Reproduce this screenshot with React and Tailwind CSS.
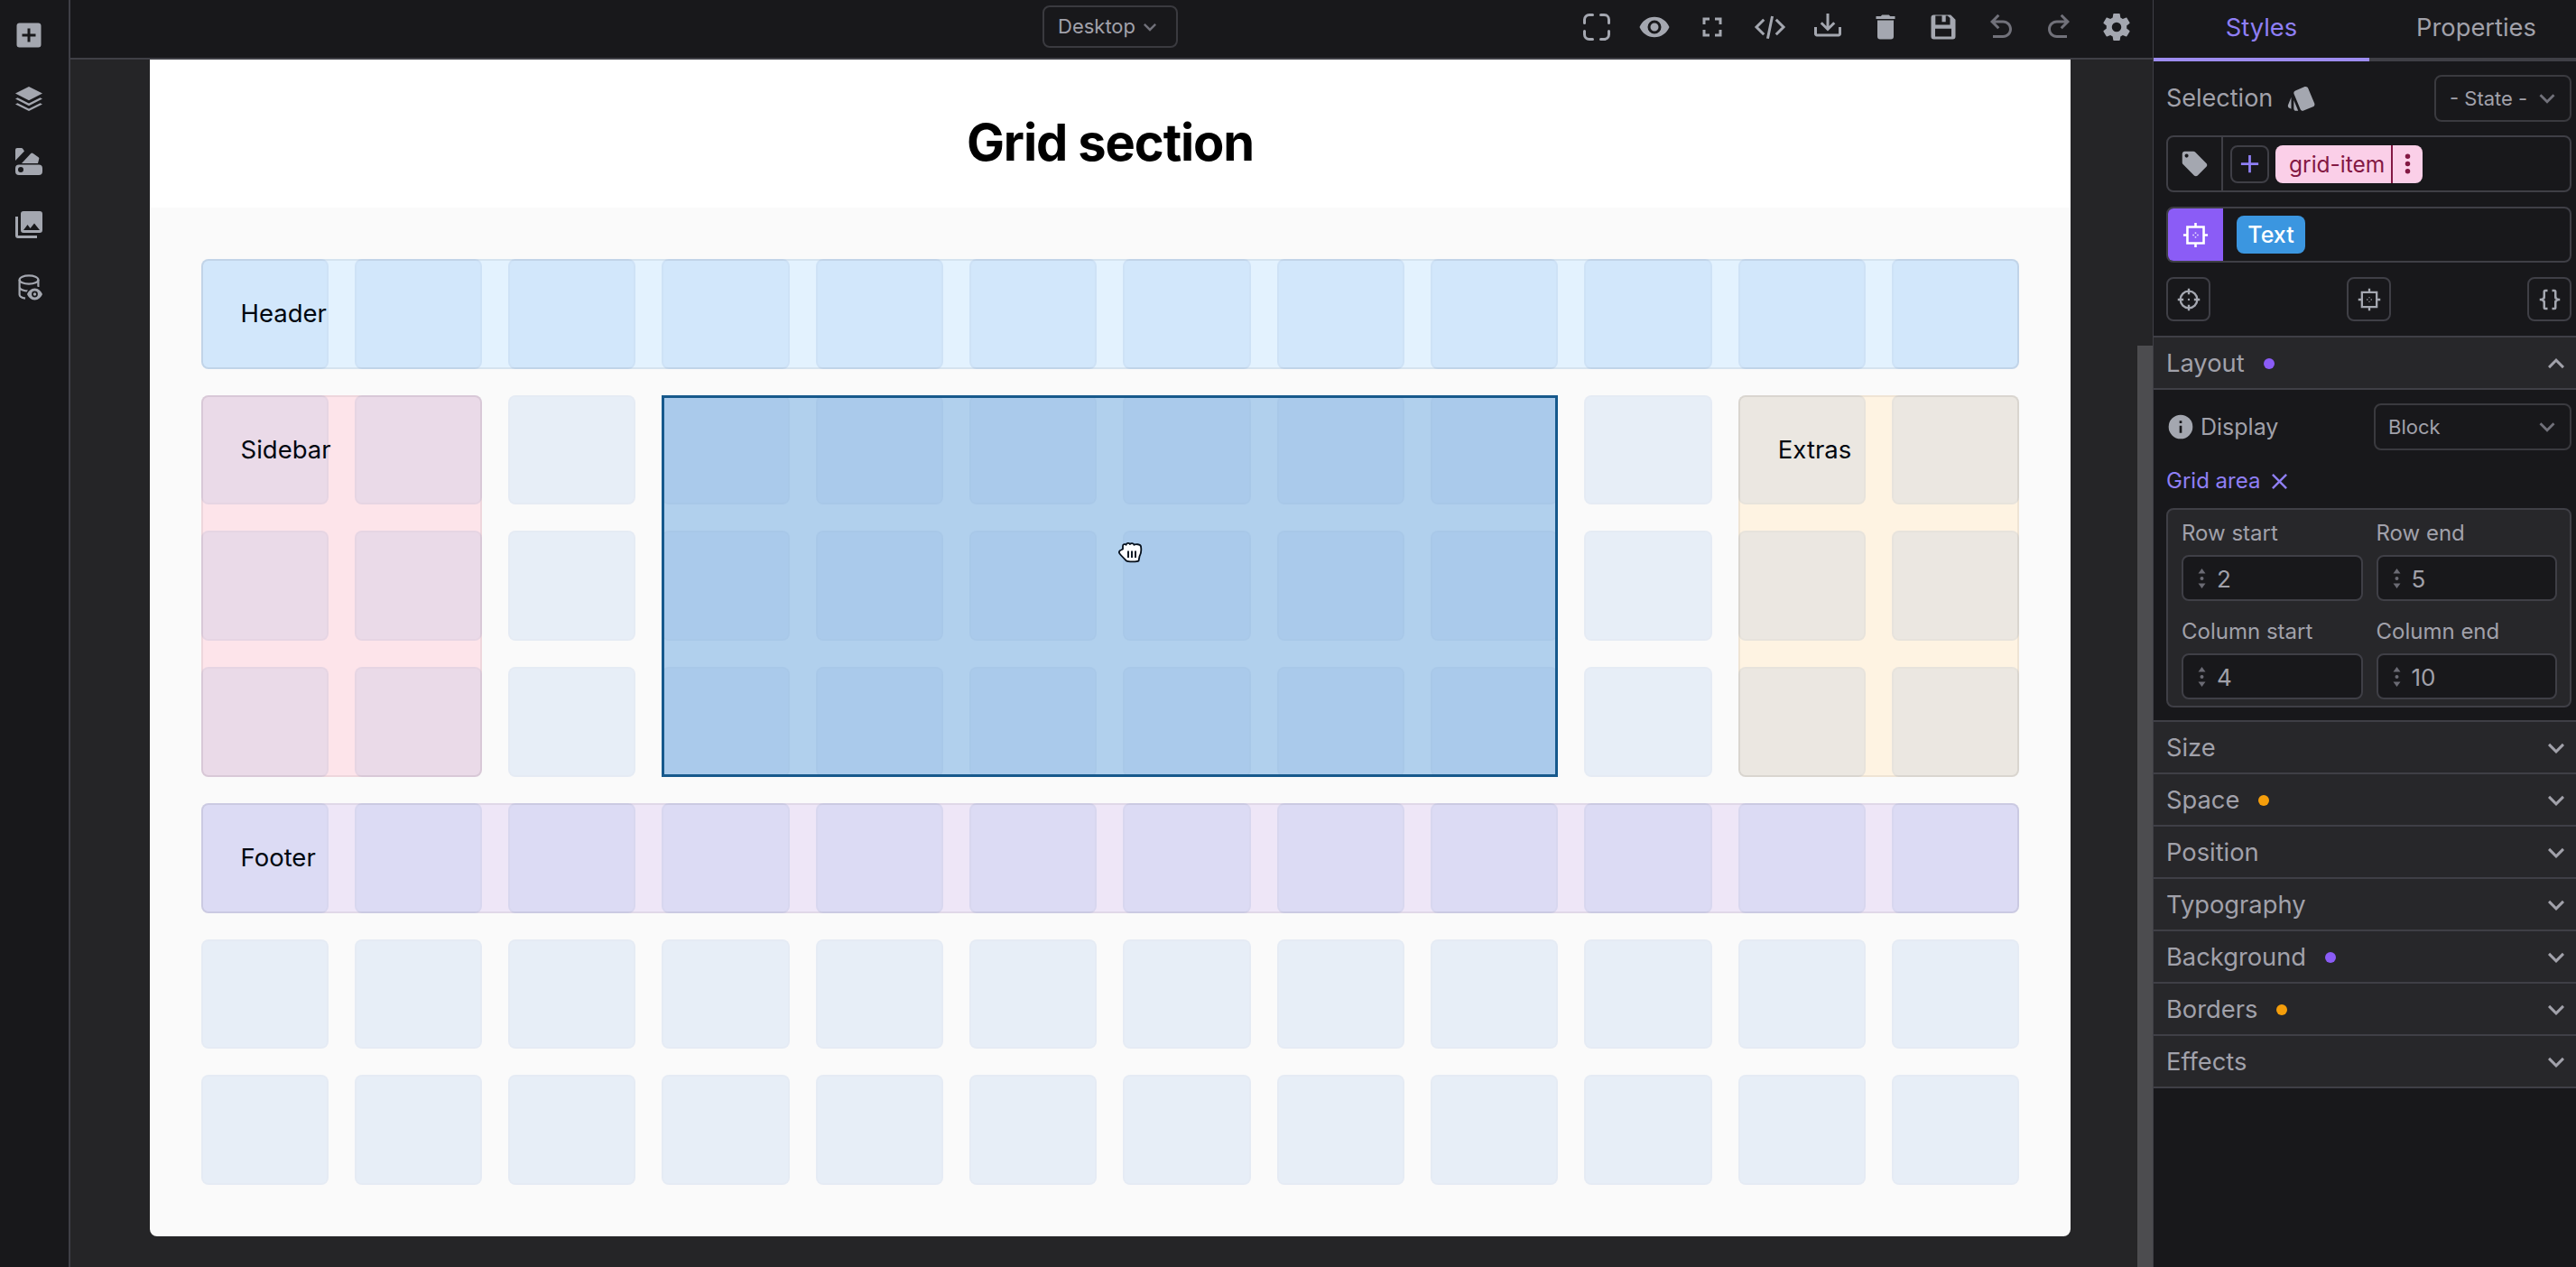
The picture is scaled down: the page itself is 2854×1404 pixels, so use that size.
import React from "react";

const P = {
  plusBox: "M17,13H13V17H11V13H7V11H11V7H13V11H17M19,3H5C3.89,3 3,3.89 3,5V19A2,2 0 0,0 5,21H19A2,2 0 0,0 21,19V5C21,3.89 20.1,3 19,3Z",
  imgs: "M22,16V4A2,2 0 0,0 20,2H8A2,2 0 0,0 6,4V16A2,2 0 0,0 8,18H20A2,2 0 0,0 22,16M11,12L13.03,14.71L16,11L20,16H8M2,6V20A2,2 0 0,0 4,22H18V20H4V6",
  eye: "M12,9A3,3 0 0,0 9,12A3,3 0 0,0 12,15A3,3 0 0,0 15,12A3,3 0 0,0 12,9M12,17A5,5 0 0,1 7,12A5,5 0 0,1 12,7A5,5 0 0,1 17,12A5,5 0 0,1 12,17M12,4.5C7,4.5 2.73,7.61 1,12C2.73,16.39 7,19.5 12,19.5C17,19.5 21.27,16.39 23,12C21.27,7.61 17,4.5 12,4.5Z",
  full: "M5,5H10V7H7V10H5V5M14,5H19V10H17V7H14V5M17,14H19V19H14V17H17V14M10,17V19H5V14H7V17H10Z",
  tray: "M2 12H4V17H20V12H22V17C22 18.11 21.11 19 20 19H4C2.9 19 2 18.11 2 17V12M12 15L17.55 9.54L16.13 8.13L13 11.25V2H11V11.25L7.88 8.13L6.46 9.55L12 15Z",
  del: "M19,4H15.5L14.5,3H9.5L8.5,4H5V6H19M6,19A2,2 0 0,0 8,21H16A2,2 0 0,0 18,19V7H6V19Z",
  undo: "M20 13.5C20 17.09 17.09 20 13.5 20H6V18H13.5C16 18 18 16 18 13.5S16 9 13.5 9H7.83L10.91 12.09L9.5 13.5L4 8L9.5 2.5L10.92 3.91L7.83 7H13.5C17.09 7 20 9.91 20 13.5Z",
  cog: "M12,15.5A3.5,3.5 0 0,1 8.5,12A3.5,3.5 0 0,1 12,8.5A3.5,3.5 0 0,1 15.5,12A3.5,3.5 0 0,1 12,15.5M19.43,12.97C19.47,12.65 19.5,12.33 19.5,12C19.5,11.67 19.47,11.34 19.43,11L21.54,9.37C21.73,9.22 21.78,8.95 21.66,8.73L19.66,5.27C19.54,5.05 19.27,4.96 19.05,5.05L16.56,6.05C16.04,5.66 15.5,5.32 14.87,5.07L14.5,2.42C14.46,2.18 14.25,2 14,2H10C9.75,2 9.54,2.18 9.5,2.42L9.13,5.07C8.5,5.32 7.96,5.66 7.44,6.05L4.95,5.05C4.73,4.96 4.46,5.05 4.34,5.27L2.34,8.73C2.21,8.95 2.27,9.22 2.46,9.37L4.57,11C4.53,11.34 4.5,11.67 4.5,12C4.5,12.33 4.53,12.65 4.57,12.97L2.46,14.63C2.27,14.78 2.21,15.05 2.34,15.27L4.34,18.73C4.46,18.95 4.73,19.03 4.95,18.95L7.44,17.94C7.96,18.34 8.5,18.68 9.13,18.93L9.5,21.58C9.54,21.82 9.75,22 10,22H14C14.25,22 14.46,21.82 14.5,21.58L14.87,18.93C15.5,18.67 16.04,18.34 16.56,17.94L19.05,18.95C19.27,19.03 19.54,18.95 19.66,18.73L21.66,15.27C21.78,15.05 21.73,14.78 21.54,14.63L19.43,12.97Z",
  swatch: "M2.53,19.65L3.87,20.21V11.18L1.44,17.04C1.03,18.06 1.5,19.23 2.53,19.65M22.03,15.95L17.07,4C16.76,3.23 16.03,2.77 15.26,2.75C15,2.75 14.73,2.79 14.47,2.9L7.1,5.95C6.35,6.26 5.89,7 5.87,7.75C5.86,8 5.91,8.29 6,8.55L11,20.5C11.29,21.28 12.03,21.74 12.81,21.75C13.07,21.75 13.33,21.7 13.58,21.6L20.94,18.55C21.96,18.13 22.45,16.96 22.03,15.95M5.88,19.75A2,2 0 0,0 7.88,21.75H9.33L5.88,13.41V19.75Z",
  tag: "M5.5,7A1.5,1.5 0 0,1 4,5.5A1.5,1.5 0 0,1 5.5,4A1.5,1.5 0 0,1 7,5.5A1.5,1.5 0 0,1 5.5,7M21.41,11.58L12.41,2.58C12.05,2.22 11.55,2 11,2H4C2.89,2 2,2.89 2,4V11C2,11.55 2.22,12.05 2.59,12.41L11.58,21.41C11.95,21.77 12.45,22 13,22C13.55,22 14.05,21.77 14.41,21.41L21.41,14.41C21.78,14.05 22,13.55 22,13C22,12.44 21.77,11.94 21.41,11.58Z",
  info: "M13,9H11V7H13M13,17H11V11H13M12,2A10,10 0 0,0 2,12A10,10 0 0,0 12,22A10,10 0 0,0 22,12A10,10 0 0,0 12,2Z",
  chev: "M7.41,8.58L12,13.17L16.59,8.58L18,10L12,16L6,10L7.41,8.58Z",
  plus: "M19,13H13V19H11V13H5V11H11V5H13V11H19V13Z",
  dots: "M12,16A2,2 0 0,1 14,18A2,2 0 0,1 12,20A2,2 0 0,1 10,18A2,2 0 0,1 12,16M12,10A2,2 0 0,1 14,12A2,2 0 0,1 12,14A2,2 0 0,1 10,12A2,2 0 0,1 12,10M12,4A2,2 0 0,1 14,6A2,2 0 0,1 12,8A2,2 0 0,1 10,6A2,2 0 0,1 12,4Z",
  close: "M19,6.41L17.59,5L12,10.59L6.41,5L5,6.41L10.59,12L5,17.59L6.41,19L12,13.41L17.59,19L19,17.59L13.41,12L19,6.41Z",
  braces: "M8,3A2,2 0 0,0 6,5V9A2,2 0 0,1 4,11H3V13H4A2,2 0 0,1 6,15V19A2,2 0 0,0 8,21H10V19H8V14A2,2 0 0,0 6,12A2,2 0 0,0 8,10V5H10V3M16,3A2,2 0 0,1 18,5V9A2,2 0 0,0 20,11H21V13H20A2,2 0 0,0 18,15V19A2,2 0 0,1 16,21H14V19H16V14A2,2 0 0,1 18,12A2,2 0 0,1 16,10V5H14V3H16Z",
};

const I = ({ d, className = "w-[36px] h-[36px]" }) => (
  <svg viewBox="0 0 24 24" fill="currentColor" className={className}><path d={d} /></svg>
);

const Corners = () => (
  <svg viewBox="0 0 24 24" fill="none" stroke="currentColor" strokeWidth="2" strokeLinecap="round" className="w-[36px] h-[36px]">
    <path d="M3 9V6.5A3.5 3.5 0 0 1 6.5 3H9M15 3H17.5A3.5 3.5 0 0 1 21 6.5V9M21 15V17.5A3.5 3.5 0 0 1 17.5 21H15M9 21H6.5A3.5 3.5 0 0 1 3 17.5V15" />
  </svg>
);
const Code = () => (
  <svg viewBox="0 0 24 24" fill="none" stroke="currentColor" strokeWidth="2" className="w-[36px] h-[36px]">
    <path d="M7.5 6.5L2 12L7.5 17.5M16.5 6.5L22 12L16.5 17.5M13.7 4L10.3 20.5" />
  </svg>
);
const Save = () => (
  <svg viewBox="0 0 24 24" fill="currentColor" fillRule="evenodd" className="w-[36px] h-[36px]">
    <path d="M5 3H17.5L21 6.5V19A2 2 0 0 1 19 21H5A2 2 0 0 1 3 19V5A2 2 0 0 1 5 3ZM6.2 3.6V10.3H17V5.4L15.2 3.6H13.8V8.2H11V3.6ZM6 13.2V19H18V13.2Z" />
  </svg>
);
const Frame = ({ className }) => (
  <svg viewBox="0 0 24 24" fill="none" stroke="currentColor" strokeWidth="2" className={className}>
    <path d="M5 5H19V19H5ZM12 1.5V5M12 19V22.5M1.5 12H5M19 12H22.5" />
    <path d="M12 9.6V10.6M12 13.4V14.4M9.6 12H10.6M13.4 12H14.4" strokeWidth="1.2" />
  </svg>
);
const Cross = ({ className }) => (
  <svg viewBox="0 0 24 24" fill="none" stroke="currentColor" strokeWidth="2" className={className}>
    <circle cx="12" cy="12" r="8" />
    <path d="M12 1.5V7M12 17V22.5M1.5 12H7M17 12H22.5" />
    <circle cx="12" cy="12" r="1" fill="currentColor" stroke="none" />
  </svg>
);
const Layers = () => (
  <svg viewBox="0 0 30 27" fill="currentColor" className="w-[30px] h-[27px]">
    <path d="M15 0L30 7.6L15 15.2L0 7.6Z" />
    <path d="M2.5 12.3L15 18.6L27.5 12.3L30 13.6L15 21.2L0 13.6Z" />
    <path d="M2.5 18.2L15 24.5L27.5 18.2L30 19.5L15 27L0 19.5Z" />
  </svg>
);
const SwatchRail = () => (
  <svg viewBox="0 0 30 30" fill="currentColor" fillRule="evenodd" className="w-[30px] h-[30px]">
    <path d="M2 0H6.5A2 2 0 0 1 8.2 .8L10 3.6L0 14V2A2 2 0 0 1 2 0Z" />
    <path d="M7 17L17 6.2A2 2 0 0 1 19.6 6L25.6 10.2A2 2 0 0 1 26 13L25 17Z" />
    <path d="M4 18.5H26A4 4 0 0 1 30 22.5V26A4 4 0 0 1 26 30H4A4 4 0 0 1 0 26V22.5A4 4 0 0 1 4 18.5ZM6 21A3 3 0 1 0 6 27A3 3 0 1 0 6 21Z" />
  </svg>
);
const DbEye = () => (
  <svg viewBox="0 0 28 31" className="w-[28px] h-[31px]">
    <g fill="none" stroke="currentColor" strokeWidth="2.2">
      <ellipse cx="12" cy="6" rx="10.4" ry="4.6" />
      <path d="M1.6 6V22.5C1.6 24.5 4.5 26 8 26.6M22.4 6V14M1.6 14C1.6 16.5 6 18.6 12 18.6C13 18.6 14 18.5 15 18.4" />
    </g>
    <path d="M18.5 13.5C13.5 13.5 10 18 9 22C10 26 13.5 30.5 18.5 30.5C23.5 30.5 27 26 28 22C27 18 23.5 13.5 18.5 13.5Z" fill="#18181b" transform="translate(0 -.5)" />
    <path d="M18.5 15.5C14.5 15.5 11.5 18.6 10 22C11.5 25.4 14.5 28.5 18.5 28.5C22.5 28.5 25.5 25.4 27 22C25.5 18.6 22.5 15.5 18.5 15.5ZM18.5 18.6A3.4 3.4 0 1 1 18.5 25.4A3.4 3.4 0 1 1 18.5 18.6ZM18.5 20.3A1.7 1.7 0 1 0 18.5 23.7A1.7 1.7 0 1 0 18.5 20.3Z" fill="currentColor" fillRule="evenodd" />
  </svg>
);
const Stepper = () => (
  <svg viewBox="0 0 8 22" fill="#6b6b74" className="w-[9px] h-[22px] shrink-0">
    <path d="M4 0L8 5.5H0ZM4 22L8 16.5H0Z" />
    <circle cx="4" cy="11" r="2" />
  </svg>
);
const Hand = () => (
  <svg viewBox="0 0 28 24" className="w-[28px] h-[24px]">
    <path d="M2.5 13.5C1.2 12 2.2 10 4 9.5L6 8.5V5C6 3.2 8.6 2.4 9.6 3.8C10 1.6 13.2 1.4 14 3C15 1.6 18 1.8 18.4 3.8C20 2.6 25.6 3 26 5.5C26.6 9 26 14 24.5 16.5L23.5 21.5C22 22.6 12 22.8 10 21.5C8 19.5 4.5 16 2.5 13.5Z" fill="#fff" stroke="#06101c" strokeWidth="1.8" strokeLinejoin="round" />
    <path d="M12 10.5V18M16 10.5V18M20 10.5V18" stroke="#06101c" strokeWidth="1.9" />
  </svg>
);

const Select = ({ label, className }) => (
  <div className={"h-[52px] border-2 border-[#3a3a3f] rounded-lg flex items-center text-[22px] text-[#a1a1aa] " + className}>
    <span>{label}</span>
    <span className="ml-auto mr-[8px] text-[#71717a]"><I d={P.chev} className="w-[34px] h-[34px]" /></span>
  </div>
);

const Num = ({ label, value, top }) => (
  <div className={top}>
    <div className="h-[30px] leading-[30px] text-[24px] text-[#a1a1aa]">{label}</div>
    <div className="mt-[9px] h-[51px] rounded-lg border-2 border-[#3f3f46] bg-[#18181b] flex items-center pl-[16px] gap-[12px] text-[26px] text-[#a1a1aa]">
      <Stepper />
      <span className="pt-[1px]">{value}</span>
    </div>
  </div>
);

const Section = ({ name, dot, open }) => (
  <div className="h-[58px] border-b-2 border-[#3f3f46] bg-[#27272a] flex items-center pl-[14px] pr-[4px] pt-[2px] text-[27.3px] text-[#a1a1aa]">
    <span>{name}</span>
    {dot && <span className={"ml-[21px] w-[12px] h-[12px] rounded-full " + dot} />}
    <span className={"ml-auto text-[#a1a1aa] " + (open ? "rotate-180" : "")}><I d={P.chev} className="w-[36px] h-[36px]" /></span>
  </div>
);

const inMain = (r, c) => r >= 2 && r <= 4 && c >= 4 && c <= 9;
const inRegion = (r, c) =>
  r === 1 || r === 5 || (r >= 2 && r <= 4 && (c <= 2 || c >= 11));

const cellClass = (r, c) => {
  if (inMain(r, c)) return "rounded-lg bg-[#0057d4]/[0.04] border-2 border-black/[0.01]";
  if (inRegion(r, c)) return "rounded-lg bg-[#0057d4]/[0.075] border-2 border-black/[0.02]";
  return "rounded-lg bg-[#0057d4]/[0.075] border-2 border-black/[0.012]";
};

const cells = [];
for (let r = 1; r <= 7; r++) for (let c = 1; c <= 12; c++) cells.push([r, c]);

export default function App() {
  return (
    <div className="w-[2854px] h-[1404px] flex overflow-hidden bg-[#18181b] [font-family:Inter,sans-serif]">
      {/* Left rail */}
      <div className="w-[78px] shrink-0 border-r-2 border-[#3f3f46] flex flex-col pl-[14px] pt-[21px] gap-[34px] text-[#a4a7b0]">
        <div className="h-[36px] flex items-center"><I d={P.plusBox} /></div>
        <div className="h-[36px] flex items-center pl-[3px]"><Layers /></div>
        <div className="h-[36px] flex items-center pl-[3px]"><SwatchRail /></div>
        <div className="h-[36px] flex items-center"><I d={P.imgs} /></div>
        <div className="h-[36px] flex items-center pl-[6px]"><DbEye /></div>
      </div>

      {/* Center */}
      <div className="w-[2308px] shrink-0 flex flex-col border-r border-[#3f3f46]">
        <div className="h-[66px] shrink-0 border-b-2 border-[#3f3f46] flex items-center pb-[5px] pr-[22px]">
          <div className="ml-[1077px] w-[150px] h-[47px] border-2 border-[#3a3a3f] rounded-lg flex items-center pl-[15px] text-[22px] text-[#a1a1aa]">
            Desktop
            <span className="ml-[2px] text-[#71717a]"><I d={P.chev} className="w-[28px] h-[28px]" /></span>
          </div>
          <div className="ml-auto flex items-center gap-[28px] text-[#a4a7b0]">
            <Corners />
            <I d={P.eye} />
            <I d={P.full} />
            <Code />
            <I d={P.tray} />
            <I d={P.del} />
            <Save />
            <span className="text-[#71717a]"><I d={P.undo} /></span>
            <span className="text-[#71717a] -scale-x-100"><I d={P.undo} /></span>
            <I d={P.cog} />
          </div>
        </div>

        <div className="flex-1 flex bg-[#252527] min-h-0">
          <div className="ml-[88px] w-[2128px] h-[1304px] shrink-0 flex flex-col bg-[#fafafa] rounded-b-lg">
            <div className="h-[164px] shrink-0 bg-white flex items-center justify-center pt-[20px]">
              <h1 className="text-[56px] font-bold text-black tracking-[-0.02em]">Grid section</h1>
            </div>
            <div className="flex-1 px-[56.5px] py-[57px] min-h-0">
              <div className="h-full grid grid-cols-12 grid-rows-7 gap-[29px] text-[27.5px] text-black">
                <div className="col-start-1 col-end-13 row-start-1 row-end-2 bg-[#e3f2fe] rounded-lg border-2 border-black/[0.06] flex items-center pl-[42px]">Header</div>
                <div className="col-start-1 col-end-3 row-start-2 row-end-5 bg-[#fde4ea] rounded-lg border-2 border-black/[0.06] pl-[42px]">
                  <div className="h-[118px] flex items-center">Sidebar</div>
                </div>
                <div className="col-start-11 col-end-13 row-start-2 row-end-5 bg-[#fef3e2] rounded-lg border-2 border-black/[0.06] pl-[42px]">
                  <div className="h-[118px] flex items-center">Extras</div>
                </div>
                <div className="col-start-1 col-end-13 row-start-5 row-end-6 bg-[#eee6f7] rounded-lg border-2 border-black/[0.06] flex items-center pl-[42px]">Footer</div>
                <div className="col-start-4 col-end-10 row-start-2 row-end-5 bg-[#b1d0ed]" />
                {cells.map(([r, c]) => (
                  <div
                    key={r + "-" + c}
                    className={cellClass(r, c)}
                    style={{ gridRow: r, gridColumn: c }}
                  />
                ))}
                <div className="col-start-4 col-end-10 row-start-2 row-end-5 relative border-[3px] border-[#17598c]">
                  <div className="absolute left-[502px] top-[159px]"><Hand /></div>
                </div>
              </div>
            </div>
          </div>
          <div className="ml-auto w-[17px] shrink-0 flex flex-col">
            <div className="h-[317px] shrink-0" />
            <div className="flex-1 bg-[#4c4c4f]" />
          </div>
        </div>
      </div>

      {/* Right panel */}
      <div className="w-[468px] shrink-0 flex flex-col">
        <div className="h-[68px] shrink-0 flex text-[27.3px]">
          <div className="w-[239px] h-full flex flex-col">
            <div className="flex-1 flex items-center justify-center text-[#8f7ff5] pb-[2px]">Styles</div>
            <div className="h-[4px] bg-[#9d8cf0]" />
          </div>
          <div className="flex-1 h-full flex flex-col">
            <div className="flex-1 flex items-center justify-center text-[#a1a1aa] pl-[8px] pb-[2px]">Properties</div>
            <div className="h-[4px] bg-[#3f3f46]" />
          </div>
        </div>

        <div className="pl-[14px] pr-[5px] pt-[15px] pb-[16px] border-b-2 border-[#3f3f46]">
          <div className="flex items-center h-[52px]">
            <span className="text-[27px] text-[#a1a1aa]">Selection</span>
            <span className="ml-[15px] text-[#a4a7b0]"><I d={P.swatch} className="w-[34px] h-[34px]" /></span>
            <Select label="- State -" className="ml-auto w-[152px] pl-[15px]" />
          </div>
          <div className="mt-[15px] h-[63px] border-2 border-[#3f3f46] rounded-lg flex items-center">
            <div className="w-[61px] h-full border-r-2 border-[#3f3f46] flex items-center justify-center text-[#a4a7b0] shrink-0">
              <I d={P.tag} className="w-[33px] h-[33px]" />
            </div>
            <div className="ml-[8px] w-[43px] h-[42px] rounded-lg border-2 border-[#3f3f46] flex items-center justify-center text-[#8f7ff5]">
              <I d={P.plus} className="w-[33px] h-[33px]" />
            </div>
            <div className="ml-[7px] w-[163px] h-[42px] rounded-lg bg-[#fbcfe8] text-[#831843] flex items-center text-[24.5px]">
              <span className="pl-[15px] w-[131px] h-full flex items-center border-r-2 border-[#831843] whitespace-nowrap pt-[2px]">grid-item</span>
              <span className="flex-1 flex justify-center"><I d={P.dots} className="w-[33px] h-[33px]" /></span>
            </div>
          </div>
          <div className="mt-[16px] h-[62px] border-2 border-[#3f3f46] rounded-lg flex items-center overflow-hidden">
            <div className="w-[61px] h-full bg-[#8b5cf6] flex items-center justify-center text-white shrink-0">
              <Frame className="w-[31px] h-[31px]" />
            </div>
            <div className="ml-[15px] w-[76px] h-[42px] rounded-lg bg-[#3b96e0] text-white flex items-center justify-center text-[25px] font-medium pt-[1px]">Text</div>
          </div>
          <div className="mt-[16px] flex justify-between text-[#a4a7b0]">
            <div className="w-[49px] h-[49px] border-2 border-[#3f3f46] rounded-lg flex items-center justify-center"><Cross className="w-[28px] h-[28px]" /></div>
            <div className="w-[49px] h-[49px] border-2 border-[#3f3f46] rounded-lg flex items-center justify-center"><Frame className="w-[28px] h-[28px]" /></div>
            <div className="w-[49px] h-[49px] border-2 border-[#3f3f46] rounded-lg flex items-center justify-center"><I d={P.braces} className="w-[30px] h-[30px]" /></div>
          </div>
        </div>

        <Section name="Layout" dot="bg-[#8b5cf6]" open />

        <div className="pl-[14px] pr-[5px] pt-[15px] pb-[14px] border-b-2 border-[#3f3f46]">
          <div className="flex items-center h-[52px]">
            <span className="text-[#a4a7b0]"><I d={P.info} className="w-[32px] h-[32px]" /></span>
            <span className="ml-[6px] text-[25px] text-[#a1a1aa] pt-[2px]">Display</span>
            <Select label="Block" className="ml-auto w-[219px] pl-[14px]" />
          </div>
          <div className="mt-[17px] h-[34px] flex items-center gap-[7px] text-[24px] text-[#8f7ff5]">
            <span>Grid area</span>
            <I d={P.close} className="w-[29px] h-[29px]" />
          </div>
          <div className="mt-[13px] border-2 border-[#3f3f46] rounded-lg bg-[#27272a] pl-[15px] pr-[14px] pt-[11px] pb-[7px] grid grid-cols-2 gap-x-[15px]">
            <Num label="Row start" value="2" />
            <Num label="Row end" value="5" />
            <Num label="Column start" value="4" top="mt-[19px]" />
            <Num label="Column end" value="10" top="mt-[19px]" />
          </div>
        </div>

        <Section name="Size" />
        <Section name="Space" dot="bg-[#f59e0b]" />
        <Section name="Position" />
        <Section name="Typography" />
        <Section name="Background" dot="bg-[#8b5cf6]" />
        <Section name="Borders" dot="bg-[#f59e0b]" />
        <Section name="Effects" />
      </div>
    </div>
  );
}
